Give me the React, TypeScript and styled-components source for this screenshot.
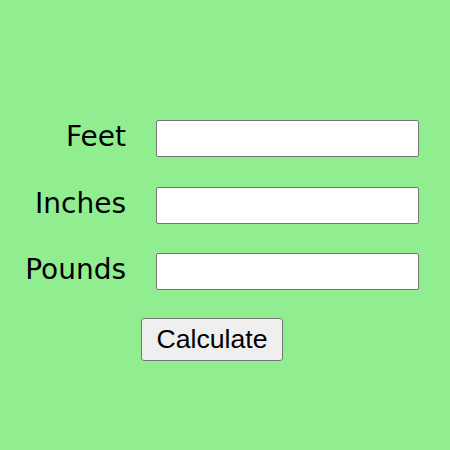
import React from "react";
import styled, { createGlobalStyle } from "styled-components";

const Global = createGlobalStyle`
  html, body { margin: 0; padding: 0; background: #90ee90; }
  body { font-family: "DejaVu Sans", Verdana, sans-serif; }
`;

const Page = styled.div`
  width: 450px;
  height: 450px;
  box-sizing: border-box;
  padding-top: 120px;
`;

const Form = styled.form`
  display: grid;
  grid-template-columns: 126px 263px;
  grid-auto-rows: 37px;
  column-gap: 30px;
  row-gap: 29.5px;
  align-items: center;
`;

const Label = styled.label`
  justify-self: end;
  align-self: start;
  font-family: "DejaVu Sans", Verdana, sans-serif;
  font-size: 28px;
  color: #000;
  line-height: 33px;
`;

const Input = styled.input`
  box-sizing: border-box;
  width: 263px;
  height: 37px;
  margin: 0;
  background: #fff;
  border: 1px solid #767676;
  border-radius: 2px;
  font-size: 20px;
  padding: 2px 4px;
`;

const ButtonRow = styled.div`
  grid-column: 1 / span 2;
  align-self: start;
  padding-left: 141px;
  margin-top: -1.5px;
`;

const Button = styled.button`
  box-sizing: border-box;
  width: 142px;
  height: 43px;
  margin: 0;
  padding: 0;
  font-family: "Liberation Sans", Arial, sans-serif;
  font-size: 26.67px;
  color: #000;
  background: #efefef;
  border: 1px solid #767676;
  border-radius: 3px;
`;

export default function App() {
  return (
    <Page>
      <Global />
      <Form onSubmit={(e) => e.preventDefault()}>
        <Label htmlFor="feet">Feet</Label>
        <Input id="feet" type="text" />
        <Label htmlFor="inches">Inches</Label>
        <Input id="inches" type="text" />
        <Label htmlFor="pounds">Pounds</Label>
        <Input id="pounds" type="text" />
        <ButtonRow>
          <Button type="submit">Calculate</Button>
        </ButtonRow>
      </Form>
    </Page>
  );
}
